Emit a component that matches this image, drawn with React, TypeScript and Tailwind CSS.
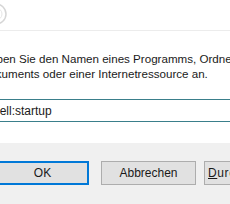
export default function App() {
  return (
    <div className="w-[230px] h-[204px] overflow-hidden bg-white flex flex-col font-['Segoe_UI','Liberation_Sans',sans-serif] text-[12px] text-[#1a1a1a]">
      {/* header strip with clipped icon */}
      <div className="h-[31px] shrink-0 border-b border-[#ececec] flex items-start">
        <svg width="10" height="28" viewBox="0 0 10 28" className="mt-[2px]">
          <circle cx="-4" cy="12" r="10" fill="none" stroke="#d6d6d6" strokeWidth="1.5" />
          <circle cx="-4" cy="12" r="6" fill="none" stroke="#e6e6e6" strokeWidth="1" />
        </svg>
      </div>

      <div className="mt-[20px] -ml-[19px] text-[11.6px] leading-[15px] whitespace-nowrap">
        <div>Geben Sie den Namen eines Programms, Ordners,</div>
        <div>Dokuments oder einer Internetressource an.</div>
      </div>

      <div className="mt-[18px] -ml-[20px] w-[260px] h-[23px] shrink-0 border border-[#3a7f8b] bg-white flex items-center pl-[6px] whitespace-nowrap">
        <span>shell:startup</span>
      </div>

      <div className="mt-[21px] flex-1 bg-[#f0f0f0] pt-[18px]">
        <div className="flex items-start -ml-[4px]">
          <button className="w-[93px] h-[24px] shrink-0 bg-[#e1e1e1] border-2 border-[#0078d7] text-[12px]">
            OK
          </button>
          <button className="ml-[12px] w-[95px] h-[24px] shrink-0 bg-[#e1e1e1] border border-[#adadad] text-[12px]">
            Abbrechen
          </button>
          <button className="ml-[8px] w-[95px] h-[24px] shrink-0 bg-[#e1e1e1] border border-[#adadad] text-[12px] text-left pl-[3px] tracking-[0.6px] whitespace-nowrap">
            <span className="underline">D</span>urchsuchen...
          </button>
        </div>
      </div>
    </div>
  );
}
